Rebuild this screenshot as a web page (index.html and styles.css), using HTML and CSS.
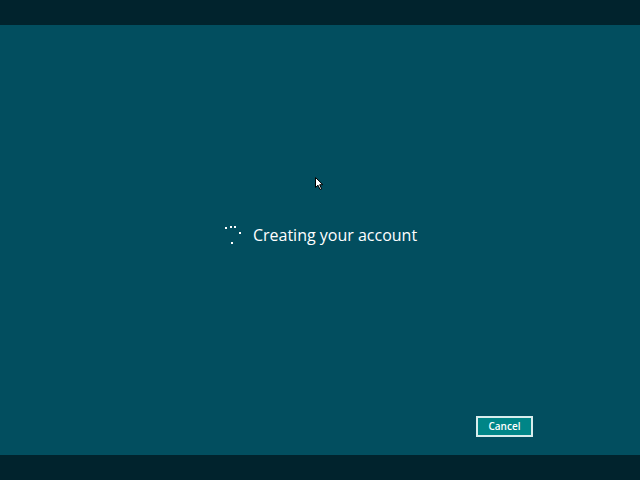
FILE: index.html
```html
<!DOCTYPE html>
<html>
<head>
<meta charset="utf-8">
<link rel="stylesheet" href="styles.css">
</head>
<body>
<div class="screen">
  <div class="bar"></div>
  <div class="main">
    <div class="status">
      <svg class="spinner" width="20" height="20" viewBox="0 0 20 20">
        <rect x="2" y="2" width="2" height="2" fill="#ffffff"/>
        <rect x="7" y="1" width="2" height="2" fill="#ffffff"/>
        <rect x="11" y="1" width="2" height="2" fill="#ffffff"/>
        <rect x="16" y="7" width="2" height="2" fill="#ffffff"/>
        <rect x="8" y="17" width="2" height="2" fill="#ffffff"/>
      </svg>
      <span class="label">Creating your account</span>
    </div>
    <div class="actions">
      <button class="btn">Cancel</button>
    </div>
    <svg class="cursor" width="10" height="14" viewBox="0 0 10 14">
      <path d="M0.5 0.5 L0.5 10.5 L3 8.2 L5 12.5 L6.6 11.8 L4.7 7.7 L7.8 7.7 Z" fill="#ffffff" stroke="#000000" stroke-width="1"/>
    </svg>
  </div>
  <div class="bar"></div>
</div>
</body>
</html>
```
FILE: styles.css
```css
html, body {
  margin: 0;
  padding: 0;
}
body {
  width: 640px;
  height: 480px;
  overflow: hidden;
  font-family: "Open Sans", "Noto Sans", "Liberation Sans", sans-serif;
}
.screen {
  display: flex;
  flex-direction: column;
  height: 480px;
}
.bar {
  height: 25px;
  background: #01232d;
  flex: none;
}
.main {
  position: relative;
  flex: 1;
  background: #024e5f;
  display: flex;
  flex-direction: column;
}
.status {
  display: flex;
  align-items: flex-start;
  justify-content: center;
  gap: 10px;
  margin-top: 200px;
}
.spinner {
  display: block;
}
.label {
  color: #ffffff;
  font-size: 16px;
  line-height: 20px;
}
.actions {
  margin-top: auto;
  display: flex;
  justify-content: flex-end;
  padding: 0 107px 18px 0;
}
.btn {
  width: 57px;
  height: 21px;
  background: #008587;
  border: 2px solid #d8ecec;
  color: #ffffff;
  font-family: "Open Sans", "Noto Sans", sans-serif;
  font-weight: 600;
  font-size: 10px;
  padding: 0;
  line-height: 15px;
}
.cursor {
  position: absolute;
  left: 315px;
  top: 152px;
}
```
